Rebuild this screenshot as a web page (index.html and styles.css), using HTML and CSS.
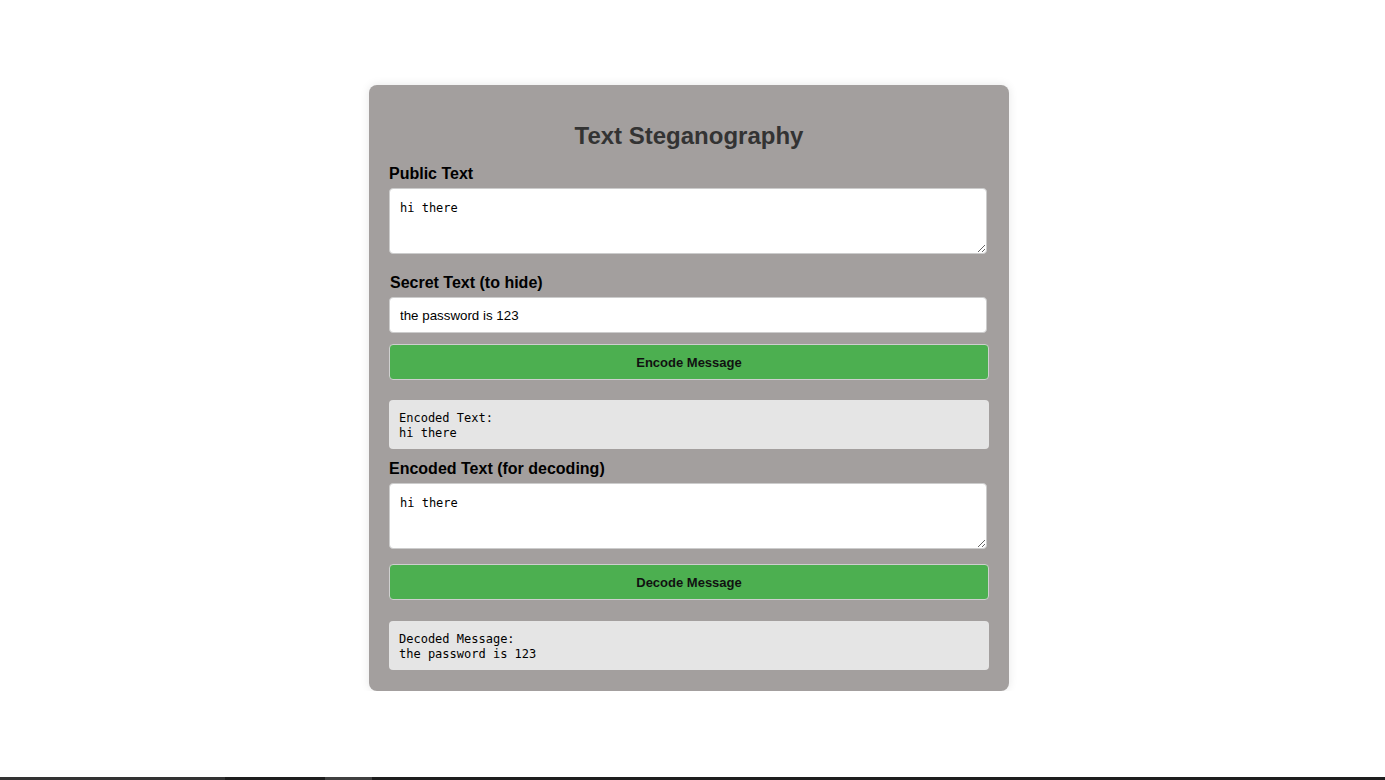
FILE: index.html
```html
<!DOCTYPE html>
<html lang="en">
<head>
<meta charset="utf-8">
<title>Text Steganography</title>
<link rel="stylesheet" href="styles.css">
</head>
<body>
<main class="card">
  <h1 class="title">Text Steganography</h1>

  <label class="label" for="public">Public Text</label>
  <textarea id="public" class="area">hi there</textarea>

  <label class="label label-shift" for="secret">Secret Text (to hide)</label>
  <input id="secret" class="field" type="text" value="the password is 123">

  <button class="btn btn-encode" type="button">Encode Message</button>

  <pre class="result result-encode">Encoded Text:
hi there</pre>

  <label class="label" for="encoded">Encoded Text (for decoding)</label>
  <textarea id="encoded" class="area area-decode">hi there</textarea>

  <button class="btn btn-decode" type="button">Decode Message</button>

  <pre class="result">Decoded Message:
the password is 123</pre>
</main>

<div class="taskbar">
  <span class="seg seg-a"></span>
  <span class="seg seg-b"></span>
  <span class="seg seg-c"></span>
  <span class="seg seg-d"></span>
</div>
</body>
</html>
```

FILE: styles.css
```css
html, body {
  margin: 0;
  background: #ffffff;
}

body {
  padding: 85px 7px 0 0;
  font-family: "Liberation Sans", Arial, sans-serif;
  color: #000;
}

.card {
  width: 640px;
  box-sizing: border-box;
  margin: 0 auto;
  padding: 20px 20px 21px;
  background: #a39f9e;
  border-radius: 8px;
  box-shadow: 0 0 10px rgba(0, 0, 0, 0.1);
  display: flex;
  flex-direction: column;
  align-items: flex-start;
}

.title {
  align-self: stretch;
  margin: 17px 0 12px;
  text-align: center;
  font-size: 24px;
  font-weight: bold;
  color: #333333;
  line-height: 28px;
}

.label {
  display: block;
  font-size: 16px;
  font-weight: bold;
  line-height: 18px;
  padding-top: 3px;
  margin-bottom: 5px;
}

.label-shift {
  margin-left: 1px;
}

.area {
  display: block;
  width: 598px;
  height: 66px;
  box-sizing: border-box;
  padding: 12px 10px 8px;
  margin: 0 0 17px;
  border: 1px solid #cccccc;
  border-radius: 4px;
  background: #ffffff;
  font-family: "DejaVu Sans Mono", monospace;
  font-size: 12px;
  line-height: 15px;
  color: #000;
  resize: vertical;
}

.area-decode {
  margin-bottom: 15px;
}

.field {
  display: block;
  width: 598px;
  height: 36px;
  box-sizing: border-box;
  padding: 0 10px;
  margin: 0 0 11px;
  border: 1px solid #cccccc;
  border-radius: 4px;
  background: #ffffff;
  font-family: "Liberation Sans", Arial, sans-serif;
  font-size: 13.33px;
  color: #000;
}

.btn {
  display: block;
  width: 600px;
  height: 36px;
  box-sizing: border-box;
  margin: 0 0 20px;
  border: 1px solid #cfcfcf;
  border-radius: 4px;
  background: #4caf50;
  font-family: "Liberation Sans", Arial, sans-serif;
  font-size: 13px;
  font-weight: bold;
  color: #111;
  cursor: pointer;
}

.btn-decode {
  margin-bottom: 21px;
}

.result {
  width: 600px;
  box-sizing: border-box;
  margin: 0;
  padding: 11px 10px 8px;
  background: #e5e5e5;
  border-radius: 4px;
  font-family: "DejaVu Sans Mono", monospace;
  font-size: 12px;
  line-height: 15px;
  color: #000;
}

.result-encode {
  margin-bottom: 8px;
}

.taskbar {
  position: fixed;
  left: 0;
  right: 0;
  bottom: 0;
  height: 3px;
  display: flex;
  background: #1e1e1e;
}

.seg {
  display: block;
  height: 100%;
}

.seg-a { width: 225px; background: #333333; }
.seg-b { width: 100px; background: #1e1e1e; }
.seg-c { width: 47px; background: #404040; }
.seg-d { flex: 1; background: #1e1e1e; }
```
